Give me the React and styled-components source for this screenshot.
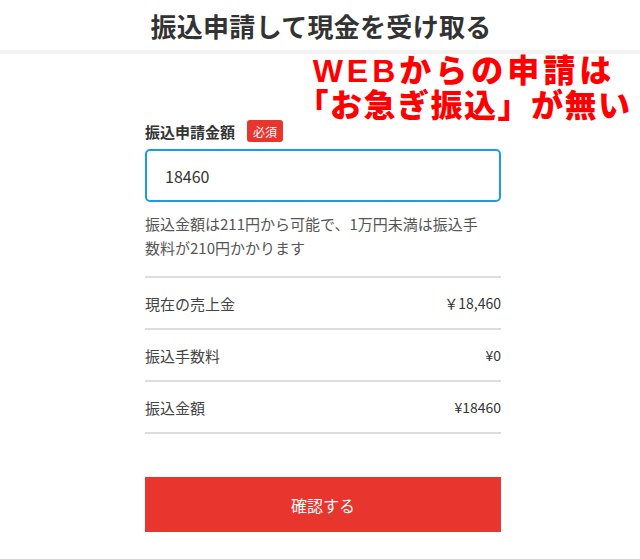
import React from "react"
import styled, { createGlobalStyle } from "styled-components"

const GlobalStyle = createGlobalStyle`
  body {
    margin: 0;
    background: #fff;
    font-family: "Noto Sans CJK JP", "Noto Sans", sans-serif;
    color: #333;
  }
`

const Page = styled.div`
  position: relative;
  width: 640px;
  height: 559px;
  overflow: hidden;
`

const Header = styled.header`
  height: 50px;
  display: flex;
  align-items: center;
  justify-content: center;
  padding-left: 2px;
  border-bottom: 4px solid #f2f2f2;

  h1 {
    margin: 0;
    font-size: 26px;
    font-weight: 700;
    color: #333;
    letter-spacing: 0.3px;
  }
`

const Note = styled.div`
  position: absolute;
  top: 54px;
  left: 284px;
  width: 360px;
  text-align: center;
  white-space: nowrap;
  font-family: "Liberation Sans", "Noto Sans CJK JP", sans-serif;
  font-size: 32px;
  font-weight: 900;
  color: #ff0000;
`

const NoteLine = styled.span`
  display: block;
  line-height: 35px;
  letter-spacing: ${(p) => p.$spacing}px;
`

const Main = styled.main`
  width: 356px;
  margin: 0 0 0 145px;
  padding-top: 66px;
`

const LabelRow = styled.div`
  display: flex;
  align-items: center;
  gap: 12px;
  height: 22px;

  label {
    font-size: 15px;
    font-weight: 700;
    color: #333;
  }
`

const Badge = styled.span`
  display: inline-flex;
  align-items: center;
  justify-content: center;
  width: 36px;
  height: 22px;
  border-radius: 3px;
  background: #e8352d;
  color: #fff;
  font-size: 12px;
`

const Input = styled.input`
  box-sizing: border-box;
  display: block;
  width: 100%;
  height: 53px;
  margin-top: 7px;
  padding: 0 18px;
  border: 2px solid #1a9be6;
  border-radius: 5px;
  font-family: inherit;
  font-size: 16px;
  color: #333;
  outline: none;
`

const Help = styled.p`
  margin: 10px 0 16px;
  padding-right: 12px;
  font-size: 15px;
  line-height: 24px;
  color: #555;
`

const Row = styled.div`
  display: flex;
  align-items: center;
  justify-content: space-between;
  height: 50px;
  border-top: 2px solid #ddd;
  font-size: 15px;
  color: #444;

  &:last-child {
    border-bottom: 2px solid #ddd;
  }

  span:last-child {
    font-size: 14px;
    color: #333;
  }
`

const Button = styled.button`
  display: block;
  width: 100%;
  height: 55px;
  margin-top: 43px;
  border: none;
  background: #e8352d;
  color: #fff;
  font-family: inherit;
  font-size: 16px;
`

const rows = [
  ["現在の売上金", "￥18,460"],
  ["振込手数料", "¥0"],
  ["振込金額", "¥18460"],
]

export default function App() {
  return (
    <Page>
      <GlobalStyle />
      <Header>
        <h1>振込申請して現金を受け取る</h1>
      </Header>
      <Note>
        <NoteLine $spacing={4}>WEBからの申請は</NoteLine>
        <NoteLine $spacing={1.5}>「お急ぎ振込」が無い</NoteLine>
      </Note>
      <Main>
        <LabelRow>
          <label>振込申請金額</label>
          <Badge>必須</Badge>
        </LabelRow>
        <Input defaultValue="18460" />
        <Help>振込金額は211円から可能で、1万円未満は振込手数料が210円かかります</Help>
        <div>
          {rows.map(([label, value]) => (
            <Row key={label}>
              <span>{label}</span>
              <span>{value}</span>
            </Row>
          ))}
        </div>
        <Button>確認する</Button>
      </Main>
    </Page>
  )
}
